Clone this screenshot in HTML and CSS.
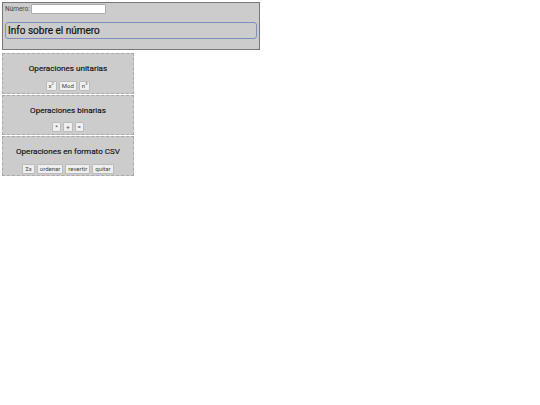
FILE: index.html
```html
<!DOCTYPE html>
<html lang="es">
<head>
    <meta charset="UTF-8">
    <title>Operaciones</title>
    <link rel="stylesheet" href="styles.css">
</head>
<body>

<div id="numero-box">
    <label class="numero-label">Número: <input type="text" id="numero"></label>
    <div id="info">Info sobre el número</div>
</div>

<div class="panel">
    <h3>Operaciones unitarias</h3>
    <div class="botones">
        <button>x<sup>2</sup></button>
        <button>Mod</button>
        <button>n<sup>3</sup></button>
    </div>
</div>

<div class="panel binarias">
    <h3>Operaciones binarias</h3>
    <div class="botones">
        <button>*</button>
        <button>+</button>
        <button>=</button>
    </div>
</div>

<div class="panel csv">
    <h3>Operaciones en formato CSV</h3>
    <div class="botones">
        <button>Σx</button>
        <button>ordenar</button>
        <button>revertir</button>
        <button>quitar</button>
    </div>
</div>

</body>
</html>
```

FILE: styles.css
```css
body {
    margin: 2px;
    font-family: Roboto, "Liberation Sans", sans-serif;
    background-color: #fff;
    color: #111;
}

#numero-box {
    width: 256px;
    height: 45px;
    padding-top: 1px;
    background-color: #ccc;
    border: 1px solid #777;
}

.numero-label {
    display: flex;
    align-items: center;
    gap: 1px;
    margin-left: 2px;
    font-size: 6.5px;
    color: #444;
}

#numero {
    width: 73px;
    height: 8px;
    padding: 0;
    background-color: #fff;
    border: 1px solid #aaa;
    border-radius: 1px;
}

#info {
    margin: 8px 2px 0;
    height: 15px;
    padding-left: 2px;
    font-size: 10px;
    font-weight: 400;
    line-height: 15px;
    border: 1px solid #7c8fbd;
    border-radius: 3px;
    -webkit-text-stroke: 0.2px #111;
}

.panel {
    width: 130px;
    height: 39px;
    margin-top: 1px;
    background-color: #ccc;
    border: 1px dashed #aaa;
    text-align: center;
}

#numero-box + .panel {
    margin-top: 3px;
}

.panel.binarias,
.panel.csv {
    height: 38px;
}

.panel.binarias .botones {
    margin-top: 6px;
}

.panel h3 {
    margin: 0;
    padding-top: 9px;
    font-size: 8.1px;
    font-weight: 400;
    line-height: 11px;
    -webkit-text-stroke: 0.15px #111;
}

.botones {
    display: flex;
    justify-content: center;
    gap: 2px;
    margin-top: 7px;
}

.botones button {
    height: 10px;
    min-width: 9px;
    padding: 0 2px;
    font-family: inherit;
    font-size: 6px;
    line-height: 8px;
    color: #444;
    background-color: #efefef;
    border: 1px solid #bbb;
    border-radius: 1px;
}

.botones sup {
    font-size: 4px;
    line-height: 0;
}
```
